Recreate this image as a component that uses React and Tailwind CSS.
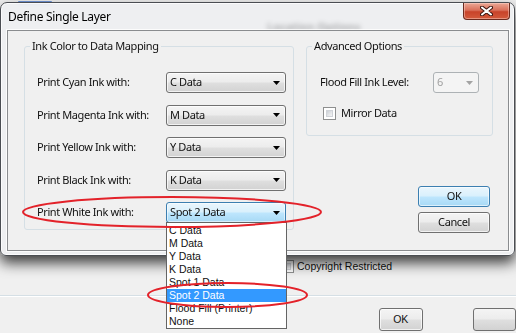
import React from "react";

const UI = "font-['Noto_Sans',sans-serif] text-[11px] tracking-[-0.4px] text-[#111]";
const TH = "font-['Liberation_Sans',Arial,sans-serif] text-[10.5px] text-[#111]";

function Arrow({ color = "#000" }) {
  return (
    <svg width="7" height="4" viewBox="0 0 7 4" className="shrink-0">
      <path d="M0 0H7L3.5 4Z" fill={color} />
    </svg>
  );
}

function Combo({ value, focused }) {
  return (
    <div
      className={
        focused
          ? "flex h-[21px] w-[120px] items-center justify-between rounded-[3px] border border-[#3c7fb1] bg-[linear-gradient(#eaf6fd,#d9f0fc_48%,#bee6fd_52%,#a7d9f5)] pl-[3px] pr-[5px] shadow-[inset_0_0_0_1px_rgba(255,255,255,0.55)]"
          : "flex h-[21px] w-[120px] items-center justify-between rounded-[3px] border border-[#707070] bg-[linear-gradient(#f4f4f4,#ececec_48%,#dfdfdf_52%,#d2d2d2)] pl-[3px] pr-[5px] shadow-[inset_0_0_0_1px_rgba(255,255,255,0.7)]"
      }
    >
      <span>{value}</span>
      <Arrow />
    </div>
  );
}

function Button({ children, primary }) {
  return (
    <div
      className={
        primary
          ? "flex h-[21px] w-[72px] items-center justify-center rounded-[3px] border border-[#3c7fb1] bg-[linear-gradient(#eaf6fd,#d9f0fc_48%,#bee6fd_52%,#a7d9f5)] shadow-[inset_0_0_0_1px_rgba(255,255,255,0.6)]"
          : "flex h-[21px] w-[72px] items-center justify-center rounded-[3px] border border-[#707070] bg-[linear-gradient(#f4f4f4,#ececec_48%,#dfdfdf_52%,#d2d2d2)] shadow-[inset_0_0_0_1px_rgba(255,255,255,0.7)]"
      }
    >
      {children}
    </div>
  );
}

function CheckBox() {
  return (
    <div className="h-[13px] w-[13px] shrink-0 border border-[#8e8f8f] bg-white p-[2px]">
      <div className="h-full w-full border border-[#d0d3d8] bg-[linear-gradient(135deg,#cbcfd5,#f6f6f6)]" />
    </div>
  );
}

const rows = [
  ["Print Cyan Ink with:", "C Data"],
  ["Print Magenta Ink with:", "M Data"],
  ["Print Yellow Ink with:", "Y Data"],
  ["Print Black Ink with:", "K Data"],
  ["Print White Ink with:", "Spot 2 Data", true],
];

const items = [
  "C Data",
  "M Data",
  "Y Data",
  "K Data",
  "Spot 1 Data",
  "Spot 2 Data",
  "Flood Fill (Printer)",
  "None",
];

export default function App() {
  return (
    <div className="relative h-[333px] w-[516px] overflow-hidden bg-[#f0f0f0]">
      {/* Background application */}
      <div className="flex flex-col">
        <div className="ml-[18px] mt-[1px] h-[2px] w-[34px] rounded-[1px] bg-[#3b6fd0]/70 blur-[0.6px]" />
        <div className="ml-[267px] mt-[17px] h-[14px] font-['Noto_Sans',sans-serif] text-[11px] font-bold leading-[14px] text-[#333] blur-[1px]">
          Location Options
        </div>
        <div className="ml-[281px] mt-[226px] flex h-[13px] items-center gap-[3px]">
          <CheckBox />
          <span className={TH + " leading-[13px]"}>Copyright Restricted</span>
        </div>
        <div className="mt-[22px] border-t border-b border-t-[#d5dfe5] border-b-white" />
        <div className="ml-[379px] mt-[11px] flex gap-[50px]">
          <div className={"flex h-[23px] w-[73px] items-center justify-center rounded-[3px] border border-[#707070] bg-[linear-gradient(#f4f4f4,#ececec_48%,#dfdfdf_52%,#d2d2d2)] shadow-[inset_0_0_0_1px_rgba(255,255,255,0.7)] " + TH}>
            OK
          </div>
          <div className="h-[23px] w-[73px] rounded-[3px] border border-[#707070] bg-[linear-gradient(#f4f4f4,#ececec_48%,#dfdfdf_52%,#d2d2d2)]" />
        </div>
      </div>

      {/* Dialog window */}
      <div className="absolute left-0 top-[2px] flex h-[254px] w-[515px] flex-col rounded-t-[7px] rounded-b-[6px] border border-[#4a4d52] bg-[#eceef1]/65 shadow-[0_7px_14px_rgba(0,0,0,0.75),inset_0_0_0_1px_rgba(255,255,255,0.7)] backdrop-blur-[2px]">
        <div className="flex h-[27px] items-start justify-between">
          <div className="flex h-[27px] items-center pl-[7px] font-['Noto_Sans',sans-serif] text-[12px] tracking-[-0.3px] text-black">
            Define Single Layer
          </div>
          <div className="mr-[4px] flex h-[17px] w-[47px] items-center justify-center rounded-b-[4px] border border-t-0 border-[#6b2a1e] bg-[linear-gradient(#eba896,#d9705a_45%,#c8432a_55%,#d35a3c)] shadow-[inset_0_0_0_1px_rgba(255,220,210,0.45)]">
            <svg width="13" height="10" viewBox="0 0 13 10">
              <path d="M2 1.5L11 8.5M11 1.5L2 8.5" stroke="#3a1610" strokeWidth="4" strokeLinecap="round" />
              <path d="M2 1.5L11 8.5M11 1.5L2 8.5" stroke="#ffffff" strokeWidth="2" strokeLinecap="round" />
            </svg>
          </div>
        </div>

        <div className={"ml-[6px] mr-[5px] h-[221px] border border-[#8a8c8f] bg-[#f0f0f0] shadow-[0_0_0_1px_rgba(255,255,255,0.8)] " + UI}>
          <div className="flex items-start gap-[12px] pl-[16px] pt-[7px]">
            <fieldset className="w-[270px] rounded-[3px] border border-[#d5dfe5]">
              <legend className="ml-[5px] px-[2px] leading-[16px]">Ink Color to Data Mapping</legend>
              <div className="flex flex-col gap-[11.5px] pb-[6px] pl-[12px] pt-[18px]">
                {rows.map(([label, value, focused]) => (
                  <div key={label} className="flex h-[21px] items-center">
                    <span className="w-[129px]">{label}</span>
                    <Combo value={value} focused={focused} />
                  </div>
                ))}
              </div>
            </fieldset>

            <div className="flex w-[187px] flex-col">
              <fieldset className="w-[187px] rounded-[3px] border border-[#d5dfe5]">
                <legend className="ml-[5px] px-[2px] leading-[16px]">Advanced Options</legend>
                <div className="flex flex-col pb-[15px] pl-[13px] pt-[18px]">
                  <div className="flex h-[21px] items-center">
                    <span className="w-[113px]">Flood Fill Ink Level:</span>
                    <div className="flex h-[21px] w-[46px] items-center justify-between rounded-[3px] border border-[#adb2b5] bg-[#f4f4f4] pl-[3px] pr-[5px] text-[#a0a0a0]">
                      <span>6</span>
                      <Arrow color="#a3a3a3" />
                    </div>
                  </div>
                  <div className="ml-[3px] mt-[14px] flex h-[13px] items-center gap-[5px]">
                    <CheckBox />
                    <span>Mirror Data</span>
                  </div>
                </div>
              </fieldset>
              <div className="mr-[3px] mt-[50px] flex flex-col items-end gap-[5px]">
                <Button primary>OK</Button>
                <Button>Cancel</Button>
              </div>
            </div>
          </div>
        </div>
      </div>

      {/* Open dropdown list */}
      <div className={"absolute left-[166px] top-[222px] w-[121px] border border-[#646464] bg-white pt-[1px] " + TH}>
        {items.map((it) => (
          <div
            key={it}
            className={
              it === "Spot 2 Data"
                ? "h-[13px] bg-[#3399ff] pl-[2px] leading-[13px] text-white"
                : "h-[13px] pl-[2px] leading-[13px]"
            }
          >
            {it}
          </div>
        ))}
      </div>

      {/* Red annotation ellipses */}
      <svg className="pointer-events-none absolute left-0 top-0" width="516" height="333" viewBox="0 0 516 333">
        <ellipse cx="172" cy="212" rx="149" ry="15" fill="none" stroke="#e3222a" strokeWidth="2" />
        <ellipse cx="227.5" cy="295" rx="79.5" ry="12" fill="none" stroke="#e3222a" strokeWidth="2" />
      </svg>
    </div>
  );
}
